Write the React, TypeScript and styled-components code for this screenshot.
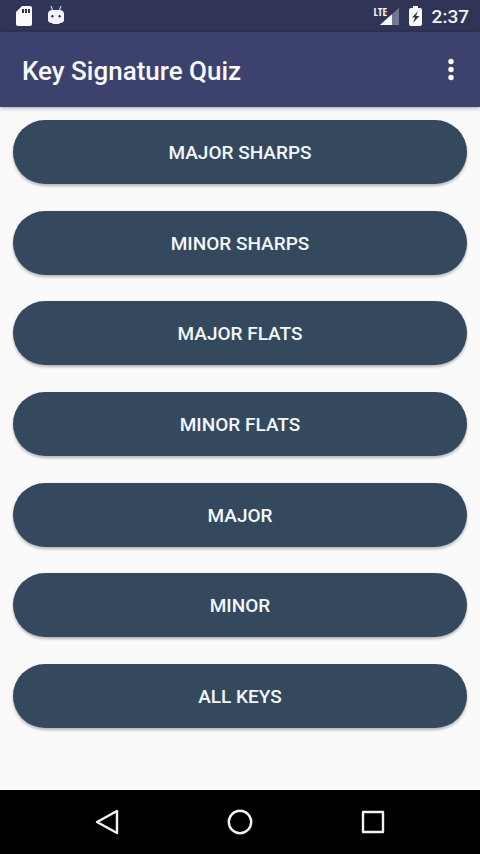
import React from "react";
import styled, { createGlobalStyle } from "styled-components";

const GlobalStyle = createGlobalStyle`
  * { box-sizing: border-box; }
  body { margin: 0; background: #fafafa; font-family: Roboto, "Liberation Sans", sans-serif; }
  button { font: inherit; color: inherit; border: 0; padding: 0; background: none; cursor: pointer; }
`;

const Screen = styled.div`
  min-height: 100vh;
  display: flex;
  flex-direction: column;
`;

const StatusBar = styled.div`
  height: 32px;
  padding: 0 11px 0 16px;
  display: flex;
  align-items: center;
  justify-content: space-between;
  background: #303456;
  color: #f4f5fb;
`;

const StatusGroup = styled.div<{ $gap: number }>`
  display: flex;
  align-items: center;
  gap: ${(p) => p.$gap}px;
`;

const Signal = styled.div`
  display: flex;
  position: relative;
`;

const NetworkType = styled.span`
  position: absolute;
  left: 0;
  top: 0;
  font-family: "Open Sans Condensed", Roboto, sans-serif;
  font-size: 11px;
  line-height: 11px;
  font-weight: 700;
`;

const Clock = styled.time`
  padding-top: 2px;
  font-size: 19px;
  line-height: 30px;
  font-weight: 500;
`;

const AppBar = styled.header`
  position: relative;
  height: 75px;
  padding: 0 16px 0 22px;
  display: flex;
  align-items: center;
  justify-content: space-between;
  background: #3c416d;
  color: #f8f9ff;
  box-shadow: 0 1px 4px rgba(0, 0, 0, 0.35);
`;

const Title = styled.h1`
  margin: 0;
  padding-top: 2px;
  font-size: 26px;
  line-height: 32px;
  font-weight: 500;
`;

const OverflowButton = styled.button`
  width: 27px;
  height: 48px;
  display: grid;
  place-items: center;
`;

const Menu = styled.main`
  flex: 1;
  padding: 13px 13px 62px;
  display: flex;
  flex-direction: column;
  justify-content: space-between;
  gap: 24px;
`;

const QuizButton = styled.button`
  && {
    height: 64px;
    padding-top: 2px;
    border-radius: 32px;
    background: #34495e;
    color: #f4f8fc;
    font-size: 19px;
    line-height: 24px;
    font-weight: 500;
    text-transform: uppercase;
    box-shadow: 0 2px 3px rgba(0, 0, 0, 0.28);
  }
`;

const NavBar = styled.nav`
  height: 64px;
  padding: 0 40px;
  display: flex;
  background: #000;
`;

const NavButton = styled.button`
  flex: 1;
  display: grid;
  place-items: center;
`;

const quizzes = [
  "Major Sharps",
  "Minor Sharps",
  "Major Flats",
  "Minor Flats",
  "Major",
  "Minor",
  "All Keys",
];

const SdCardIcon = () => (
  <svg width="16" height="20" viewBox="0 0 16 20" aria-hidden="true">
    <path
      fill="#fafaff"
      fillRule="evenodd"
      d="M6 0H14Q16 0 16 2V18Q16 20 14 20H2Q0 20 0 18V6ZM6 3V7H8V3ZM9 3V7H11V3ZM12 3V7H14V3Z"
    />
  </svg>
);

const AndroidIcon = () => (
  <svg width="16" height="20" viewBox="0 0 16 20" aria-hidden="true">
    <path d="M3 0L5 5M13 0L11 5" stroke="#c9cce0" strokeWidth="1.2" />
    <path
      fill="#f2f3fb"
      d="M3 4H13Q16 5 16 8V14Q16 17 12 17L11 18H5L4 17Q0 17 0 14V8Q0 5 3 4Z"
    />
    <circle cx="4.3" cy="10.2" r="1.2" fill="#303456" />
    <circle cx="11.7" cy="10.2" r="1.2" fill="#303456" />
  </svg>
);

const SignalIcon = () => (
  <svg width="25" height="20" viewBox="0 0 25 20" aria-hidden="true">
    <path d="M25 2V19H6Z" fill="#74778f" />
    <path d="M18 8.2V19H6Z" fill="#fafaff" />
  </svg>
);

const BatteryIcon = () => (
  <svg width="13" height="20" viewBox="0 0 13 20" aria-hidden="true">
    <path
      fill="#fafaff"
      d="M4 0H9V2H11Q13 2 13 4V18Q13 20 11 20H2Q0 20 0 18V4Q0 2 2 2H4Z"
    />
    <path d="M9 5L3 11.5H6L4 17L10.5 10H7Z" fill="#303456" />
  </svg>
);

const OverflowIcon = () => (
  <svg width="8" height="24" viewBox="0 0 8 24" fill="#fff" aria-hidden="true">
    <circle cx="4" cy="3.5" r="2.7" />
    <circle cx="4" cy="11.5" r="2.7" />
    <circle cx="4" cy="19.5" r="2.7" />
  </svg>
);

const navShape = {
  width: 28,
  height: 28,
  viewBox: "0 0 28 28",
  fill: "none",
  stroke: "#f2f2f2",
  strokeWidth: 2.4,
  strokeLinejoin: "round" as const,
  "aria-hidden": true,
};

export default function App() {
  return (
    <Screen>
      <GlobalStyle />
      <StatusBar>
        <StatusGroup $gap={16}>
          <SdCardIcon />
          <AndroidIcon />
        </StatusGroup>
        <StatusGroup $gap={10}>
          <Signal>
            <SignalIcon />
            <NetworkType>LTE</NetworkType>
          </Signal>
          <BatteryIcon />
          <Clock>2:37</Clock>
        </StatusGroup>
      </StatusBar>
      <AppBar>
        <Title>Key Signature Quiz</Title>
        <OverflowButton type="button" aria-label="More options">
          <OverflowIcon />
        </OverflowButton>
      </AppBar>
      <Menu>
        {quizzes.map((name) => (
          <QuizButton key={name} type="button">
            {name}
          </QuizButton>
        ))}
      </Menu>
      <NavBar>
        <NavButton type="button" aria-label="Back">
          <svg {...navShape}>
            <path d="M24 3V25L4 14Z" />
          </svg>
        </NavButton>
        <NavButton type="button" aria-label="Home">
          <svg {...navShape}>
            <circle cx="14" cy="14" r="11.2" />
          </svg>
        </NavButton>
        <NavButton type="button" aria-label="Recent apps">
          <svg {...navShape}>
            <rect x="4" y="4" width="20" height="20" />
          </svg>
        </NavButton>
      </NavBar>
    </Screen>
  );
}
